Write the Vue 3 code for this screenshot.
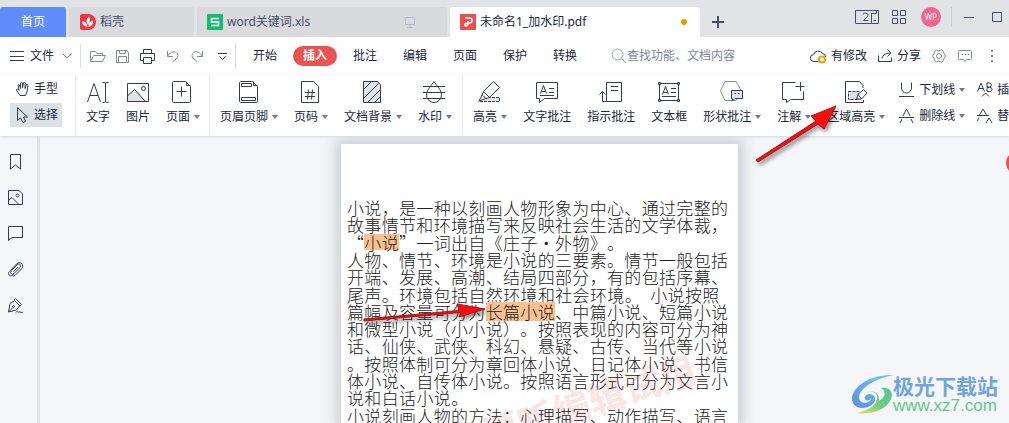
<script setup>
const perLine = 22

const lines = [
  { n: 22, parts: [{ t: '小说，是一种以刻画人物形象为中心、通过完整的' }] },
  { n: 22, parts: [{ t: '故事情节和环境描写来反映社会生活的文学体裁，' }] },
  { n: 16, parts: [{ t: '“' }, { t: '小说', hl: true }, { t: '”一词出自《庄子•外物》。' }] },
  { n: 22, parts: [{ t: '人物、情节、环境是小说的三要素。情节一般包括' }] },
  { n: 22, parts: [{ t: '开端、发展、高潮、结局四部分，有的包括序幕、' }] },
  { n: 21.5, parts: [{ t: '尾声。环境包括自然环境和社会环境。\u00a0\u00a0小说按照' }] },
  { n: 22, parts: [{ t: '篇幅及容量可分为' }, { t: '长篇小说', hl: true, tall: true }, { t: '、中篇小说、短篇小说' }] },
  { n: 22, parts: [{ t: '和微型小说（小小说）。按照表现的内容可分为神' }] },
  { n: 22, parts: [{ t: '话、仙侠、武侠、科幻、悬疑、古传、当代等小说' }] },
  { n: 22, parts: [{ t: '。按照体制可分为章回体小说、日记体小说、书信' }] },
  { n: 22, parts: [{ t: '体小说、自传体小说。按照语言形式可分为文言小' }] },
  { n: 7, parts: [{ t: '说和白话小说。' }] },
  { n: 22, parts: [{ t: '小说刻画人物的方法：心理描写、动作描写、语言' }] },
]

const g = '#dfe2e6'

const groups = [
  [
    { label: '文字', p: [{ d: 'M1.5 22L8 3.5L14.5 22M4 15.5H12M19.5 3V22M16.5 2.5H18.5L19.5 3.5L20.5 2.5H22.5M16.5 22.5H18.5L19.5 21.5L20.5 22.5H22.5' }] },
    { label: '图片', p: [{ d: 'M1.5 16L8.5 9.5L19.5 21.5H1.5Z', f: g }, { d: 'M1.5 3.5H22.5V21.5H1.5ZM19.5 8.5A2 2 0 1 1 15.5 8.5A2 2 0 1 1 19.5 8.5Z' }] },
    { label: '页面', menu: true, p: [{ d: 'M2.5 1.5H14.5L19.5 6.5V21.5L18.5 22.5H2.5L1.5 21.5V2.5ZM15.5 1.5V5.5H19.5M5.5 11.5H15.5M10.5 6.5V16.5' }] },
  ],
  [
    { label: '页眉页脚', menu: true, p: [{ d: 'M3.5 1.5H15.5L20.5 6.5V21.5L19.5 22.5H3.5L2.5 21.5V2.5ZM16.5 1.5V5.5H20.5M4.5 3.5H14.5V6.5H4.5ZM4.5 17.5H18.5V20.5H4.5Z' }] },
    { label: '页码', menu: true, p: [{ d: 'M2.5 1.5H14.5L19.5 6.5V22.5H2.5ZM6 12.5H16M6 16.5H16M9.5 9.5L8.5 19.5M13.5 9.5L12.5 19.5' }] },
    { label: '文档背景', menu: true, p: [{ d: 'M2.5 1.5H16.5L19.5 4.5V22.5H2.5Z', f: g }, { d: 'M2.5 9.5L10.5 1.5M2.5 18.5L17.5 3.5M6.5 22.5L19.5 9.5M13.5 22.5L19.5 16.5' }] },
    { label: '水印', menu: true, p: [{ d: 'M11 1.5C9 5 3.5 9.5 3.5 15A7.5 7.5 0 0 0 18.5 15C18.5 9.5 13 5 11 1.5ZM0 6.5H22M0 12.5H22M0 18.5H22' }] },
  ],
  [
    { label: '高亮', menu: true, p: [{ d: 'M6 17.5H21.5V21.5H.5', f: g, dash: true }, { d: 'M15.5 1.5L21.5 7.5L11.5 17.5L8 18.5L1 21L4 15L5.5 11.5Z', f: '#fff' }, { d: 'M5.5 11.5L11.5 17.5M4 15L8 18.5', f: 'none' }] },
    { label: '文字批注', p: [{ d: 'M1.5 2.5H22.5V18.5H9.5L4.5 22.5V18.5H1.5ZM5.5 13.5L8.5 5.5L11.5 13.5M6.5 11.5H10.5M14 8.5H19M14 12.5H19M5 15.5H19' }] },
    { label: '指示批注', p: [{ d: 'M7.5 2.5H22.5V21.5H7.5ZM7.5 21.5H3.5V11.5M.5 14.5L3.5 11.5L6.5 14.5M12 6.5H19M12 10.5H19' }] },
    { label: '文本框', p: [{ d: 'M2.5 3.5H21.5V20.5H2.5ZM5.5 14.5L8.5 6.5L11.5 14.5M6.5 12.5H10.5M14 8.5H19M14 12.5H19M5 16.5H19' }, { d: 'M1.5 2.5H3.5V4.5H1.5ZM20.5 2.5H22.5V4.5H20.5ZM1.5 19.5H3.5V21.5H1.5ZM20.5 19.5H22.5V21.5H20.5Z', f: '#fff' }] },
    { label: '形状批注', menu: true, p: [{ d: 'M5 1.5H16L21.5 11L16 20.5H5L.5 11Z', light: true }, { d: 'M11.5 10.5H22.5V18.5H15L12.5 21V18.5H11.5Z', f: g }, { d: 'M14.5 13.5H16M18 13.5H19.5' }] },
    { label: '注解', menu: true, p: [{ d: 'M13.5 2.5H.5V19.5H4.5V22.5L8.5 19.5H21.5V11.5M13.5 6.5H22.5M18.5 2V11' }] },
    { label: '区域高亮', menu: true, p: [{ d: 'M19 8V5.5L15.5 1.5H1.5V22.5H19.5V20' }, { d: 'M4.5 11.5H15V19.5H4.5Z', f: g, dash: true }, { d: 'M19.5 9.5L23 13L17.5 19H12.5L14 14.5Z', f: '#fff' }, { d: 'M14 14.5L17.5 19' }] },
  ],
]

const sideIcons = [
  { label: '书签', d: 'M3.5 1.5H13.5V16L8.5 12L3.5 16Z' },
  { label: '缩略图', d: 'M1.5 1.5H12L15.5 5V15.5H1.5ZM1.5 11.5L5 8.5L12 15.5M12 6.5A1.5 1.5 0 1 1 9 6.5A1.5 1.5 0 1 1 12 6.5Z' },
  { label: '批注', d: 'M1.5 1.5H15.5V12.5H5L1.5 15.5Z' },
  { label: '附件', d: 'M4.5 9.5L10 4C12.500 1.500 15 4.500 12.500 7L7 12.500C5 14.500 2.500 12 4.500 10M7 12.500L5.500 14C3 16.500 0 13 2.500 10.500L9.500 3M9.500 3C13.500 -.5 18 4 14.500 8L8 14.500C7 15.500 5.500 15 5.500 14M6.500 10.500L11 6' },
  { label: '签名', d: 'M8.5 1.5L14.5 7.5L13 9L7 3ZM7 4L3 6.5L1.5 15L9.5 13L12.5 9M1.5 15L6 10.5M7.5 9.5A1 1 0 1 1 5.5 9.5A1 1 0 1 1 7.5 9.5ZM9 15.5C11 12 11 17 13 14.5C13 16 15 15.5 16 15' },
]

const quick = [
  { label: '打开', light: true, d: 'M1.5 13.5V3.5H6.5L8 5.5H13.5V7.5M1.5 13.5L4.5 7.5H16.5L13.5 13.5Z' },
  { label: '保存', light: true, d: 'M2.5 2.5H12.5L14.5 4.5V14.5H2.5ZM5.5 2.5V5.5H11.5V2.5M4.5 14.5V8.5H12.5V14.5' },
  { label: '打印', d: 'M4.5 5.5V1.5H12.5V5.5M4.5 12.5H1.5V5.5H15.5V12.5H12.5M4.5 9.5H12.5V15.5H4.5Z' },
  { label: '撤销', light: true, d: 'M3.5 3V8.5H9M3.5 8.5C6 3 13.5 2 14 7.5C14 11 10.5 11.5 8.5 14' },
  { label: '恢复', light: true, d: 'M13.5 3V8.5H8M13.5 8.5C11 3 3.5 2 3 7.5C3 11 6.5 11.5 8.5 14' },
  { label: '更多', d: 'M4 5.5H13M5.5 8.5L8.5 11.5L11.5 8.5' },
]
const menus = ['开始', '插入', '批注', '编辑', '页面', '保护', '转换']
</script>

<template>
  <div class="app" lang="zh-CN">
    <header class="tabs">
      <button class="tab home">首页</button>
      <button class="tab docer">
        <svg width="16" height="16" viewBox="0 0 16 16"><path d="M0 2Q0 0 2 0H8A8 8 0 0 1 8 16H2Q0 16 0 14Z" fill="#f5333f" /><path d="M7.500 13C2.500 12 2 9 2.500 7C5 7 7 9 7.500 13ZM8 11C5.500 7 7 4 9 2.500C10.500 5 10 8 8 11ZM8.500 13C8.500 9 10.500 7 13 6.500C13.500 9 12 12.500 8.500 13Z" fill="#fff" /></svg>
        <span>稻壳</span>
      </button>
      <button class="tab doc">
        <svg width="16" height="16" viewBox="0 0 16 16"><rect width="16" height="16" rx="1" fill="#17ba75" /><path class="logo-line" d="M12 4.500H4.500V8H11.500V11.500H4" /></svg>
        <span>word关键词.xls</span>
        <svg class="end screen" width="12" height="12" viewBox="0 0 12 12"><path d="M1.500 1.500H10.500V8.500H1.500ZM6 8.500V11M3 11.500H9" /></svg>
      </button>
      <button class="tab doc active">
        <svg width="16" height="16" viewBox="0 0 16 16"><rect width="16" height="16" rx="1" fill="#e8504f" /><path class="logo-line" d="M5 4H9.500A2.500 2.500 0 0 1 9.500 9H8V7M8 9C8 11 7 12 5.500 12A1.500 1.500 0 0 1 5.500 9.500H8" /></svg>
        <span>未命名1_加水印.pdf</span>
        <i class="end unsaved"></i>
      </button>
      <button class="add" aria-label="新建"><svg width="12" height="12" viewBox="0 0 12 12"><path d="M0 6H12M6 0V12" /></svg></button>
      <div class="window">
        <button aria-label="窗口"><svg width="24" height="14" viewBox="0 0 24 14"><path d="M16 13.500H.5V.5H23.500V13.500H16.500V3.500H21.500V1M18.500 10.500H21M8 4.500Q8 3 10.500 3Q13 3 13 5Q13 6.500 8.500 10.500H13.500" /></svg></button>
        <button aria-label="应用"><svg width="14" height="14" viewBox="0 0 14 14"><path d="M.5.5H5.500V5.500H.5ZM8.500.5H13.500V5.500H8.500ZM.5 8.500H5.500V13.500H.5ZM8.500 8.500H13.500V13.500H8.500Z" /></svg></button>
        <button class="avatar">WP</button>
        <i class="vline"></i>
        <button aria-label="最小化"><svg width="10" height="10" viewBox="0 0 10 10"><path d="M0 5.500H10" /></svg></button>
        <button aria-label="最大化"><svg width="10" height="10" viewBox="0 0 10 10"><path d="M.5.5H9.500V9.500H.5Z" /></svg></button>
      </div>
    </header>

    <nav class="menubar">
      <button class="file">
        <svg width="14" height="12" viewBox="0 0 14 12"><path d="M0 1.500H14M0 6.500H14M0 10.500H14" /></svg>
        <span>文件</span>
        <svg class="pale" width="10" height="6" viewBox="0 0 10 6"><path d="M.5.5L5 5L9.500.5" /></svg>
      </button>
      <i class="vline"></i>
      <div class="quick">
        <button v-for="q in quick" :key="q.label" :aria-label="q.label" :class="{ pale: q.light }">
          <svg width="17" height="17" viewBox="0 0 17 17"><path :d="q.d" /></svg>
        </button>
      </div>
      <i class="vline"></i>
      <div class="menus">
        <button v-for="m in menus" :key="m" :class="{ on: m === '插入' }"><span>{{ m }}</span></button>
      </div>
      <label class="search">
        <svg width="16" height="16" viewBox="0 0 16 16"><circle cx="6.500" cy="6.500" r="5.500" /><path d="M10.500 10.500L15 15" /></svg>
        <input type="text" aria-label="查找" placeholder="查找功能、文档内容" />
      </label>
      <div class="status">
        <button>
          <svg width="17" height="15" viewBox="0 0 17 15"><path d="M8 12.500H4A3.500 3.500 0 0 1 3.500 5.500A5 5 0 0 1 12.500 4.500A3.500 3.500 0 0 1 15.500 8" /><circle class="dot" cx="12" cy="10.500" r="3" /></svg>
          <span>有修改</span>
        </button>
        <button>
          <svg width="15" height="14" viewBox="0 0 15 14"><path d="M.5 6.500V12.500H13.500V8.500M4 9.500Q5 4 12.500 4M9.500.5L13 4L9.500 7.500" /></svg>
          <span>分享</span>
        </button>
      </div>
      <div class="tools">
        <button aria-label="设置" class="pale"><svg width="14" height="14" viewBox="0 0 14 14"><path d="M4.500 1L7 2L9.500 1L11.500 2.500L12 5L13.500 7L12 9L11.500 11.500L9.500 13L7 12L4.500 13L2.500 11.500L2 9L.5 7L2 5L2.500 2.500Z" /><circle cx="7" cy="7" r="2.500" /></svg></button>
        <button aria-label="反馈" class="pale"><svg width="14" height="14" viewBox="0 0 14 14"><path d="M1.500 1.500H12.500Q13.500 1.500 13.500 2.500V9.500Q13.500 10.500 12.500 10.500H8.500L7 12.500L5.500 10.500H1.500Q.5 10.500 .5 9.500V2.500Q.5 1.500 1.500 1.500ZM3.500 5.500H5M6.500 5.500H8M9.500 5.500H11" /></svg></button>
        <button aria-label="更多选项" class="pale"><svg width="14" height="14" viewBox="0 0 14 14"><path class="dots" d="M8 1V3M8 6V8M8 11V13" /></svg></button>
      </div>
    </nav>

    <div class="ribbon">
      <div class="modes">
        <button><svg width="16" height="16" viewBox="0 0 16 16"><path d="M5 14.500L1.500 9.500Q1 8 2.500 8L4 9.500L3 4Q3.500 2.500 4.500 4L5.500 7.500L5.500 2Q6.500.5 7.500 2V7L8.500 1.500Q9.500.5 10.300 2L10 7.500L11.500 3.500Q13 3 13 4.500L12 11L10.500 14.500Z" /></svg><span>手型</span></button>
        <button class="on"><svg width="16" height="16" viewBox="0 0 16 16"><path d="M2.500.5V13.500L5.500 11L8 15.500L10.500 14.500L8.500 10H12.500Z" /></svg><span>选择</span></button>
      </div>
      <div v-for="(gr, i) in groups" :key="i" class="group">
        <button v-for="it in gr" :key="it.label" class="item">
          <svg width="24" height="24" viewBox="0 0 24 24">
            <path v-for="(p, k) in it.p" :key="k" :d="p.d" :fill="p.f || 'none'" :class="{ dash: p.dash, light: p.light }" />
          </svg>
          <span class="label">{{ it.label }}<i v-if="it.menu" class="caret"></i></span>
        </button>
      </div>
      <div class="pair">
        <button><svg width="16" height="16" viewBox="0 0 16 16"><path d="M2.500.5V6A5 5 0 0 0 12.500 6V.5M0 14.500H15" /></svg><span class="label">下划线<i class="caret"></i></span></button>
        <button><svg width="16" height="16" viewBox="0 0 16 16"><path d="M4 8L7.500 1L11 8M3 11L1 15M12 11L14 15M0 9.500H15" /></svg><span class="label">删除线<i class="caret"></i></span></button>
      </div>
      <div class="pair">
        <button><svg width="16" height="16" viewBox="0 0 16 16"><path d="M.5 9.500L4 1L7.500 9.500M2 6.500H6M10 1V9.500H13Q15.500 9 15 7Q15 5.500 12.500 5.200H10H12.500Q14.500 5 14.300 3Q14 1 12.500 1H10M5 14.500L8.500 11L12 14.500" /></svg><span class="label">插入符</span></button>
        <button><svg width="16" height="16" viewBox="0 0 16 16"><path d="M2.500 7L6 1L9.500 7M2 9.500L.5 13M0 7.500H12M9 15L12 10L15 15" /></svg><span class="label">替换符</span></button>
      </div>
    </div>

    <div class="body">
      <aside class="side">
        <button v-for="s in sideIcons" :key="s.label" :aria-label="s.label">
          <svg width="17" height="17" viewBox="0 0 17 17"><path :d="s.d" /></svg>
        </button>
      </aside>
      <main class="canvas">
        <article class="page">
          <div class="mark">福昕编辑试用</div>
          <div class="text">
            <p v-for="(l, i) in lines" :key="i" :style="{ width: (l.n / perLine) * 100 + '%' }"><span v-for="(p, k) in l.parts" :key="k" :class="{ hl: p.hl, tall: p.tall }">{{ p.t }}</span></p>
          </div>
          <svg class="arrow inner" width="130" height="24" viewBox="0 0 130 24"><path d="M3 17L98 8.500L96 2L124 7L98 15L100 10.500L3 19Z" /></svg>
        </article>
        <button class="bubble" aria-label="助手"></button>
        <div class="brand">
          <svg width="44" height="40" viewBox="0 0 44 40">
            <defs>
              <linearGradient id="sky" x1="0" y1="1" x2="1" y2="0"><stop offset="0" stop-color="#5b8edb" /><stop offset="1" stop-color="#74cdf2" /></linearGradient>
              <linearGradient id="leaf" x1="0" y1="1" x2="1" y2="0"><stop offset="0" stop-color="#e6e65a" /><stop offset=".5" stop-color="#71cc7f" /><stop offset="1" stop-color="#56c39a" /></linearGradient>
            </defs>
            <path d="M43 1C24 0 4 9 1 23C0 32 9 37 19 32C26 28 26 21 19 20C15 20 13 23 14 25C15 27 19 27 20 24C20 30 8 31 8 23C9 14 23 5 43 1Z" fill="url(#sky)" />
            <path d="M15 19C23 15 29 21 25 28C22 34 14 37 5 39C22 41 36 35 40 25C43 17 37 13 30 14C36 18 34 23 28 27C29 20 23 15 15 19Z" fill="url(#leaf)" />
          </svg>
          <div><b>极光下载站</b><a href="#">www.xz7.com</a></div>
        </div>
      </main>
    </div>
    <svg class="arrow outer" width="90" height="66" viewBox="0 0 90 66"><path d="M6 58L66 19L61 14L86 4L74 27L68 22L8 60Z" /></svg>
  </div>
</template>

<style>
body {
  margin: 0;
}
</style>

<style scoped>
.app {
  position: relative;
  display: flex;
  flex-direction: column;
  height: 100vh;
  overflow: hidden;
  background: #f5f6f9;
  color: #20283c;
  font: 12px/16px "Noto Sans", "Noto Sans CJK SC", sans-serif;
}
button {
  display: flex;
  align-items: center;
  margin: 0;
  padding: 0;
  border: 0;
  background: none;
  color: inherit;
  font: inherit;
  white-space: nowrap;
}
svg {
  flex: none;
  display: block;
  fill: none;
  stroke: #343c50;
  stroke-width: 1;
}
.tab svg,
.brand svg {
  stroke: none;
}
.logo-line {
  stroke: #fff;
  stroke-width: 1.5;
}
.vline {
  flex: none;
  width: 1px;
  height: 24px;
  background: #d9dbe2;
}
.pale svg,
svg.pale {
  stroke: #858b98;
}
.dots {
  stroke-width: 2;
}

.tabs {
  flex: none;
  display: flex;
  align-items: flex-end;
  height: 37px;
  background: #e2e3e7;
}
.tab {
  height: 30px;
  margin-right: 3px;
  border-radius: 3px 3px 0 0;
  background: #d8dade;
  color: #46506a;
  gap: 4px;
}
.tab.home {
  justify-content: center;
  width: 66px;
  background: #5f8dfb;
  color: #fff;
}
.tab.docer {
  width: 125px;
  padding-left: 11px;
}
.tab.doc {
  width: 250px;
  padding: 0 13px 0 10px;
}
.tab.active {
  margin-right: 12px;
  background: #fff;
  color: #20283c;
}
.end {
  margin-left: auto;
}
.tab .screen {
  margin-right: 18px;
  stroke: #b4b9d0;
}
.unsaved {
  width: 6px;
  height: 6px;
  border-radius: 50%;
  background: #e89a00;
}
.add {
  height: 30px;
}
.add svg {
  stroke: #46506a;
  stroke-width: 2;
}
.window {
  display: flex;
  align-items: center;
  align-self: stretch;
  height: 33px;
  margin-left: auto;
  padding-right: 7px;
}
.window button {
  margin-right: 13px;
}
.window .vline {
  height: 20px;
  margin-right: 12px;
  background: #cbcdd5;
}
.window svg {
  stroke: #46506a;
}
.window button.avatar {
  justify-content: center;
  width: 20px;
  height: 20px;
  margin: 0 10px 0 2px;
  border-radius: 50%;
  background: #f4648f;
  color: #fff;
  font-size: 8px;
}
.window button:last-child {
  margin: 0 0 0 5px;
}

.menubar {
  flex: none;
  display: flex;
  align-items: center;
  height: 38px;
  background: #fff;
}
.file {
  gap: 6px;
  margin-right: 8px;
  padding-left: 10px;
}
.file .pale {
  margin-left: 2px;
}
.quick {
  display: flex;
  gap: 8px;
  margin: 0 4px 0 8px;
}
.menus {
  display: flex;
  margin-left: 4px;
}
.menus button {
  justify-content: center;
  width: 50px;
}
.menus span {
  padding: 2px 10px;
  border-radius: 10px;
}
.menus .on span {
  background: #ea5450;
  color: #fff;
  font-weight: 700;
}
.search {
  flex: 1;
  display: flex;
  align-items: center;
  min-width: 0;
  margin-left: 21px;
}
.search svg {
  stroke: #98a1b5;
}
.search input {
  flex: 1;
  min-width: 0;
  padding: 0;
  border: 0;
  outline: 0;
  background: none;
  font: inherit;
}
.search input::placeholder {
  color: #7b859d;
  opacity: 1;
}
.status {
  display: flex;
  gap: 11px;
}
.status button {
  gap: 4px;
}
.status .dot {
  stroke: #f5a100;
  stroke-width: 2;
}
.tools {
  display: flex;
  gap: 12px;
  padding: 0 11px;
}

.ribbon {
  position: relative;
  z-index: 1;
  flex: none;
  display: flex;
  height: 61px;
  overflow: hidden;
  background: #fff;
  box-shadow: 0 1px 3px #d5d8de;
}
.modes {
  flex: none;
  width: 52px;
  padding: 2px 13px 0 10px;
}
.modes button {
  width: 52px;
  height: 24px;
  margin-bottom: 2px;
  gap: 3px;
  padding-left: 5px;
  box-sizing: border-box;
}
.modes .on {
  background: #dce1e6;
}
.group {
  flex: none;
  display: flex;
  align-items: flex-start;
  gap: 16px;
  padding: 5px 10px 0;
  border-left: 1px solid #e8eaee;
}
.group:nth-child(2) {
  padding-right: 9px;
}
.group:nth-child(4) {
  padding-right: 14px;
}
.item {
  flex-direction: column;
  gap: 5px;
}
.label {
  display: flex;
  align-items: center;
}
.caret {
  margin-left: 4px;
  border: 3px solid transparent;
  border-top: 4px solid #6f7a92;
  border-bottom: 0;
}
.dash {
  stroke-dasharray: 3 1;
}
.light {
  stroke: #858b98;
}
.pair {
  flex: none;
  display: flex;
  flex-direction: column;
  gap: 10px;
  margin-right: 12px;
  padding-top: 7px;
}
.pair button {
  gap: 4px;
}

.body {
  flex: 1;
  display: flex;
  min-height: 0;
}
.side {
  width: 37px;
  padding-top: 7px;
  border-right: 3px solid #e1e2e9;
  box-sizing: content-box;
}
.side button {
  justify-content: center;
  width: 31px;
  height: 36px;
}
.canvas {
  position: relative;
  flex: 1;
  display: flex;
  justify-content: center;
  min-width: 0;
  padding: 8px 0 0 30px;
  overflow: hidden;
}
.page {
  position: relative;
  width: 397px;
  padding: 55px 10px 0 6px;
  box-sizing: border-box;
  background: #fff;
  box-shadow: 0 0 12px 6px #cfd1d5;
}
.text {
  position: relative;
  display: grid;
  grid-auto-rows: 1fr;
  height: 225px;
  color: #222;
  font: 300 17px/17px "Noto Sans CJK SC", sans-serif;
  text-spacing-trim: space-all;
}
.text p {
  margin: 0;
  white-space: nowrap;
  text-align: justify;
  text-align-last: justify;
}
.hl {
  background: linear-gradient(#fac090, #fac090) center / 100% 16px no-repeat;
}
.hl.tall {
  background-size: 100% 19px;
}
.mark {
  position: absolute;
  right: 44px;
  top: 202px;
  transform: rotate(-18deg);
  transform-origin: right center;
  color: #fbe4e4;
  font: 700 37px/40px "Noto Sans CJK SC", sans-serif;
  white-space: nowrap;
}
.arrow {
  position: absolute;
  fill: #f90d0d;
  stroke: #9c1a1a;
  filter: drop-shadow(2px 3px 2px rgba(0, 0, 0, 0.45));
}
.arrow.inner {
  left: 20px;
  top: 158px;
}
.arrow.outer {
  z-index: 2;
  right: 169px;
  top: 102px;
}
.bubble {
  position: absolute;
  right: -21px;
  top: 15px;
  width: 24px;
  height: 24px;
  border-radius: 50%;
  background: #f0504c;
  box-shadow: 0 0 0 1px #fff;
}
.brand {
  position: absolute;
  right: 11px;
  bottom: 8px;
  display: flex;
  align-items: center;
}
.brand div {
  display: flex;
  flex-direction: column;
  margin-left: -2px;
}
.brand b {
  color: #6fa5dc;
  font: 700 21px/24px "Noto Sans CJK SC", sans-serif;
}
.brand a {
  color: #62c987;
  font: 17px/18px "Liberation Sans", sans-serif;
  text-decoration: none;
}
</style>
